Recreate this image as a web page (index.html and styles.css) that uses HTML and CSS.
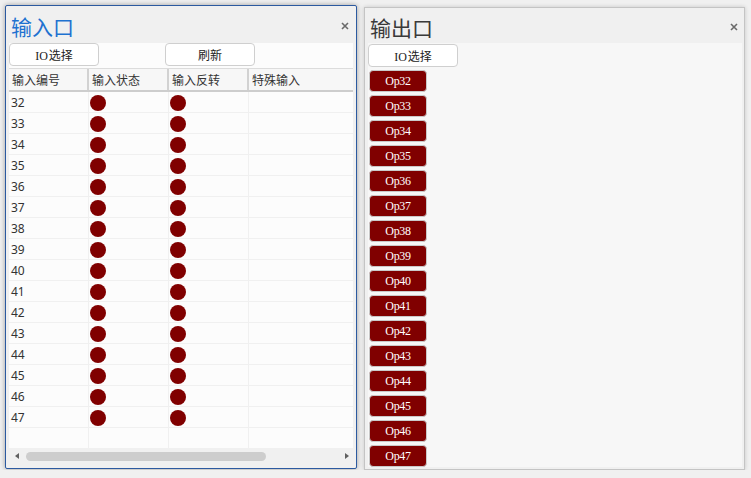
FILE: index.html
```html
<!DOCTYPE html>
<html lang="zh">
<head>
<meta charset="utf-8">
<title>IO</title>
<link rel="stylesheet" href="styles.css">
</head>
<body>
<div class="page">
  <section class="panel panel-in">
    <div class="title-bar">
      <span class="title title-blue">输入口</span>
      <svg class="close" width="8" height="8" viewBox="0 0 8 8"><path d="M1 1L7 7M7 1L1 7" stroke="#6a6a6a" stroke-width="1.6" fill="none"/></svg>
    </div>
    <div class="content">
      <div class="toolbar">
        <button class="btn"><span class="lat">IO</span>选择</button>
        <button class="btn btn-refresh">刷新</button>
      </div>
      <div class="grid">
        <div class="row head">
          <div class="cell">输入编号</div>
          <div class="cell">输入状态</div>
          <div class="cell">输入反转</div>
          <div class="cell wide">特殊输入</div>
        </div>
        <div class="body" id="rows"></div>
      </div>
      <div class="hscroll">
        <span class="arrow arrow-left"></span>
        <div class="track"><div class="thumb"></div></div>
        <span class="arrow arrow-right"></span>
      </div>
    </div>
  </section>
  <section class="panel panel-out">
    <div class="title-bar title-bar-out">
      <span class="title title-gray">输出口</span>
      <svg class="close" width="8" height="8" viewBox="0 0 8 8"><path d="M1 1L7 7M7 1L1 7" stroke="#6a6a6a" stroke-width="1.6" fill="none"/></svg>
    </div>
    <div class="content content-out">
      <button class="btn"><span class="lat">IO</span>选择</button>
      <div class="outs" id="outs"></div>
    </div>
  </section>
</div>
<script>
  var rows = document.getElementById('rows');
  var outs = document.getElementById('outs');
  for (var i = 32; i <= 47; i++) {
    var r = document.createElement('div');
    r.className = 'row';
    r.innerHTML = '<div class="cell num">' + i + '</div><div class="cell"><span class="dot"></span></div><div class="cell"><span class="dot"></span></div><div class="cell wide"></div>';
    rows.appendChild(r);
    var b = document.createElement('div');
    b.className = 'op';
    b.textContent = 'Op' + i;
    outs.appendChild(b);
  }
  var f = document.createElement('div');
  f.className = 'row filler';
  f.innerHTML = '<div class="cell"></div><div class="cell"></div><div class="cell"></div><div class="cell wide"></div>';
  rows.appendChild(f);
</script>
</body>
</html>
```

FILE: styles.css
```css
html, body {
  margin: 0;
  padding: 0;
  background: #f0f0f0;
  font-family: "Noto Sans CJK SC", "Noto Sans", sans-serif;
  color: #333;
}

.page {
  display: flex;
  align-items: flex-start;
  gap: 7px;
  padding: 5px 0 0 5px;
}

.panel {
  box-sizing: border-box;
  display: flex;
  flex-direction: column;
  background: #f0f0f0;
}

.panel-in {
  width: 352px;
  height: 464px;
  border: 1px solid #2c5aa0;
  border-radius: 2px;
  box-shadow: 0 0 5px rgba(0, 0, 0, 0.35);
}

.panel-out {
  width: 381px;
  height: 463px;
  margin-top: 2px;
  border: 1px solid #c4c4c4;
  box-shadow: 0 0 4px rgba(0, 0, 0, 0.18);
}

.title-bar {
  height: 37px;
  flex: none;
  display: flex;
  align-items: center;
  justify-content: space-between;
  padding: 2px 7px 0 5px;
  box-sizing: border-box;
}

.title-bar-out {
  height: 35px;
  padding: 3px 6px 0 5px;
}

.title {
  font-size: 21px;
  line-height: 24px;
  font-weight: 400;
}

.title-blue { color: #1f72d0; }
.title-gray { color: #3a3a3a; }

.close { display: block; }

.content {
  flex: 1;
  margin: 0 3px 4px 3px;
  background: #fcfcfc;
  display: flex;
  flex-direction: column;
  min-height: 0;
}

.content-out {
  margin: 0 2px 2px 3px;
  background: #f7f7f7;
  align-items: flex-start;
}

.toolbar {
  display: flex;
  height: 23px;
  flex: none;
}

.btn {
  box-sizing: border-box;
  width: 90px;
  height: 23px;
  padding: 0;
  margin: 0;
  background: #fff;
  border: 1px solid #cfcfcf;
  border-radius: 4px;
  font-family: "Noto Sans CJK SC", sans-serif;
  font-size: 12px;
  color: #222;
  line-height: 21px;
}

.lat {
  font-family: "Liberation Serif", serif;
  font-size: 12px;
  margin-right: 1px;
}

.btn-refresh { margin-left: 66px; }

.content-out .btn { margin-top: 1px; }

.grid {
  margin-top: 2px;
  flex: 1;
  display: flex;
  flex-direction: column;
  min-height: 0;
}

.row {
  display: flex;
  height: 21px;
  box-sizing: border-box;
  border-bottom: 1px solid #f0f0f0;
  flex: none;
}

.cell {
  box-sizing: border-box;
  width: 80px;
  flex: none;
  border-right: 1px solid #f0f0f0;
  font-size: 12px;
  line-height: 20px;
  padding-left: 1px;
  display: flex;
  align-items: center;
}

.cell.wide { width: 100px; border-right: none; }

.head {
  height: 24px;
  border-top: 1px solid #dcdcdc;
  border-bottom: 2px solid #cdcdcd;
  background: #f7f7f7;
}

.head .cell {
  border-right: 2px solid #d2d2d2;
  padding-left: 3px;
  color: #333;
  line-height: 21px;
}

.head .cell.wide { border-right: none; width: 100px; }

.body {
  flex: 1;
  display: flex;
  flex-direction: column;
  min-height: 0;
  overflow: hidden;
}

.num {
  padding-left: 2px;
  padding-top: 1px;
  font-family: "Noto Sans", sans-serif;
  color: #333;
}

.dot {
  width: 16px;
  height: 16px;
  margin-top: 1px;
  border-radius: 50%;
  background: #800000;
  display: block;
}

.row.filler {
  flex: 1;
  border-bottom: none;
}

.hscroll {
  flex: none;
  height: 16px;
  background: #f0f0f0;
  display: flex;
  align-items: center;
  padding: 0 4px 0 6px;
}

.arrow {
  width: 0;
  height: 0;
  border-top: 3.5px solid transparent;
  border-bottom: 3.5px solid transparent;
  flex: none;
}

.arrow-left { border-right: 4px solid #606060; }
.arrow-right { border-left: 4px solid #606060; }

.track {
  flex: 1;
  margin: 0 8px 0 7px;
  height: 9px;
}

.thumb {
  width: 240px;
  height: 9px;
  border-radius: 5px;
  background: #cdcdcd;
}

.outs {
  margin: 3px 0 0 1px;
  display: flex;
  flex-direction: column;
  gap: 3px;
}

.op {
  box-sizing: border-box;
  width: 58px;
  height: 22px;
  background: #800000;
  border: 1px solid #c9c9c9;
  border-radius: 4px;
  color: #fff;
  font-family: "Liberation Serif", serif;
  font-size: 12px;
  letter-spacing: -0.3px;
  line-height: 20px;
  text-align: center;
}
```
